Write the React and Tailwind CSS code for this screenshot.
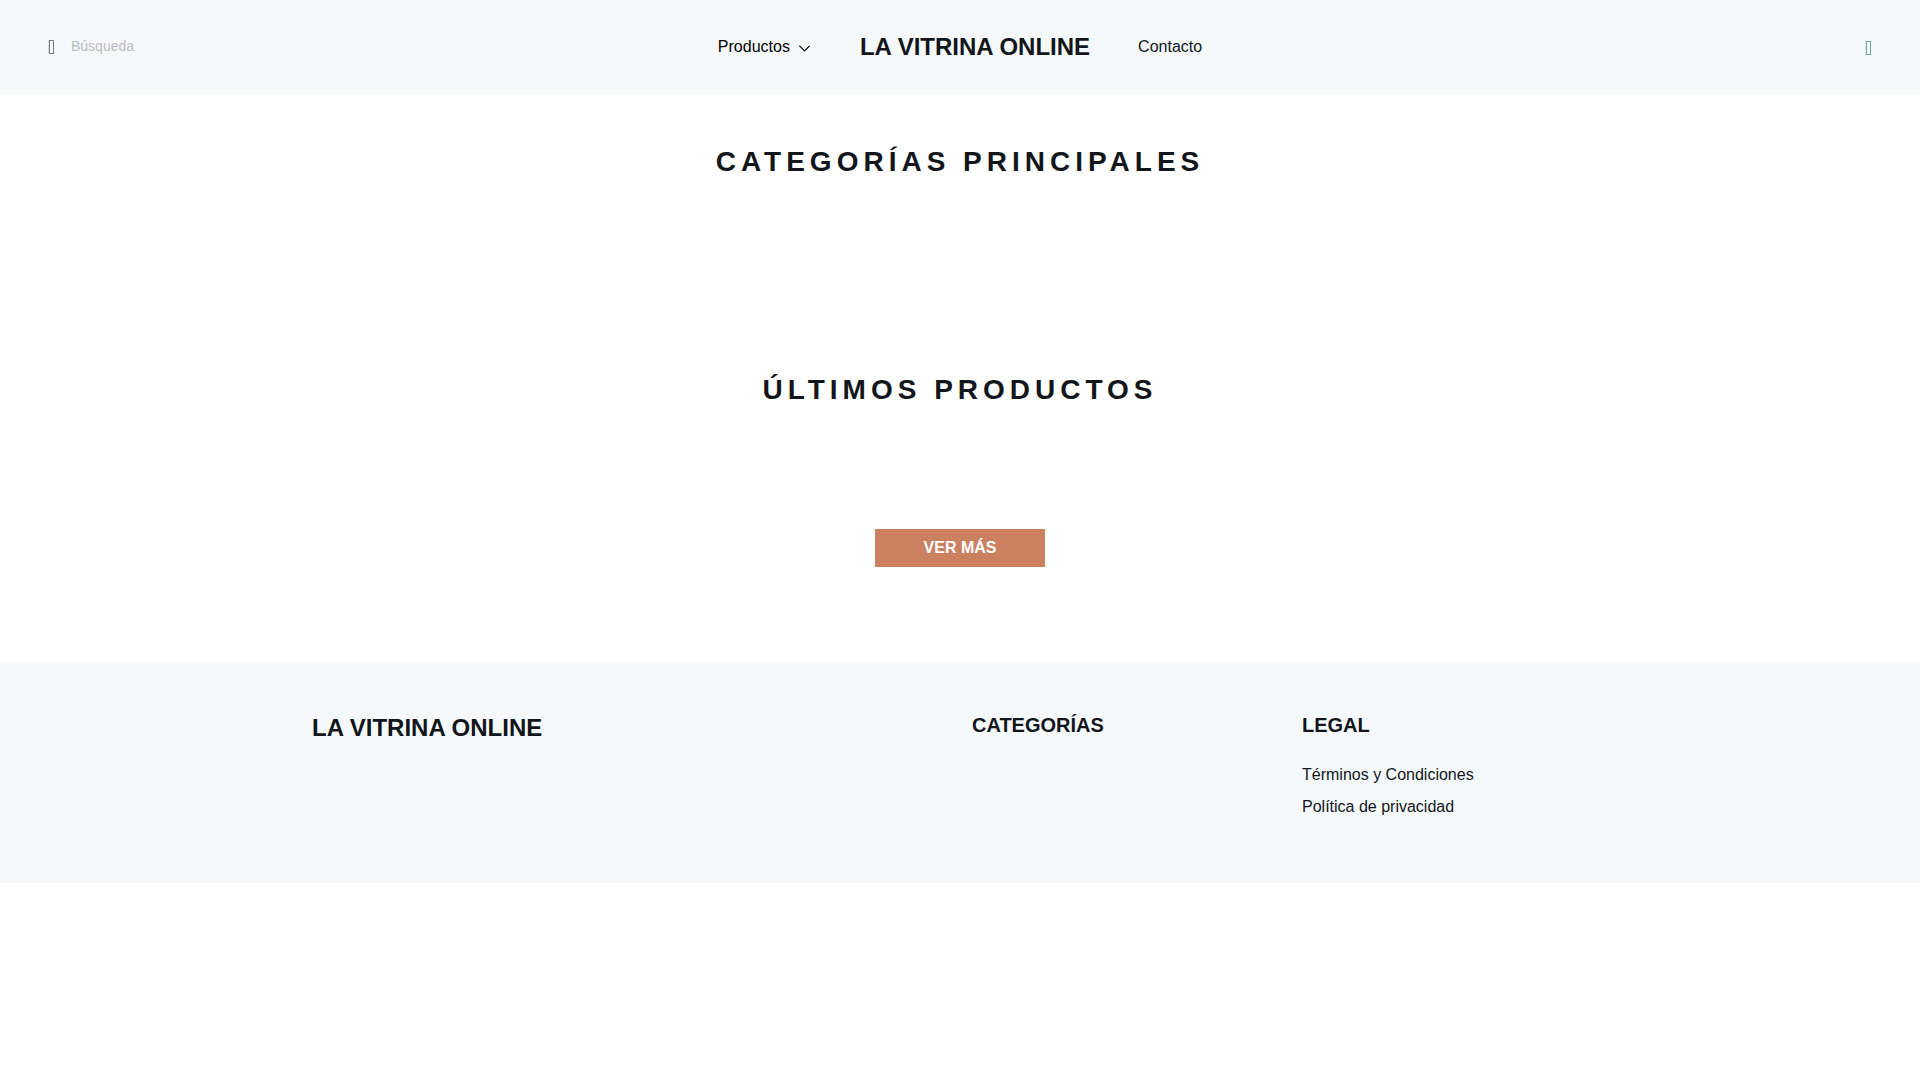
const legalLinks = [
  { id: 1, label: 'Términos y Condiciones' },
  { id: 2, label: 'Política de privacidad' },
];

function BoxIcon() {
  return (
    <svg width="6" height="14" viewBox="0 0 6 14" fill="none" stroke="currentColor" aria-hidden="true">
      <path d="M0.5 0V14" strokeOpacity="0.2" />
      <rect x="1.5" y="0.5" width="4" height="13" />
    </svg>
  );
}

function Chevron() {
  return (
    <svg className="mt-0.5 mr-px" width="13" height="13" viewBox="0 0 16 16" fill="none" stroke="currentColor" strokeWidth="1.5" strokeLinecap="round" strokeLinejoin="round" aria-hidden="true">
      <path d="M2 5l6 6 6-6" />
    </svg>
  );
}

function SectionTitle({ children }) {
  return <h2 className="text-center text-[28px] leading-10 font-bold tracking-[5px] uppercase">{children}</h2>;
}

export default function App() {
  return (
    <div className="bg-white text-[#12161a] text-base font-['Liberation_Sans',Arial,sans-serif]">
      {/* Header */}
      <header className="grid grid-cols-[1fr_auto_1fr] items-center min-h-[94px] px-12 bg-[#f5f9fc]">
        <form className="flex items-center gap-[17px]" onSubmit={(e) => e.preventDefault()}>
          <button type="submit" aria-label="Buscar" className="text-[#777788]">
            <BoxIcon />
          </button>
          <input
            type="search"
            placeholder="Búsqueda"
            aria-label="Búsqueda"
            className="w-48 pb-0.5 bg-transparent text-sm outline-none placeholder:text-[#b8bcc3]"
          />
        </form>

        <nav className="flex items-center gap-12">
          <button type="button" className="flex items-center gap-2 text-black">
            Productos
            <Chevron />
          </button>
          <a href="#" className="text-2xl font-bold">LA VITRINA ONLINE</a>
          <a href="#contacto">Contacto</a>
        </nav>

        <button type="button" aria-label="Carrito" className="justify-self-end mt-0.5 mr-px text-[#70a993]">
          <BoxIcon />
        </button>
      </header>

      {/* Sections */}
      <main>
        <section className="pt-12 pb-35">
          <SectionTitle>Categorías principales</SectionTitle>
        </section>
        <section className="flex flex-col items-center pt-12 pb-24">
          <SectionTitle>Últimos productos</SectionTitle>
          <a href="#productos" className="mt-[119px] px-[49px] py-[7px] bg-[#cb8060] text-white font-bold">VER MÁS</a>
        </section>
      </main>

      {/* Footer */}
      <footer className="pt-12 pb-16 bg-[#f5f9fc]">
        <div className="grid grid-cols-[2fr_1fr_1fr] max-w-[1320px] mx-auto">
          <div className="px-3">
            <a href="#" className="block text-2xl leading-[34px] font-bold">LA VITRINA ONLINE</a>
          </div>
          <div className="px-3">
            <h3 className="text-xl leading-7 font-bold">CATEGORÍAS</h3>
          </div>
          <div className="px-3">
            <h3 className="text-xl leading-7 font-bold">LEGAL</h3>
            <ul className="flex flex-col gap-2 mt-6">
              {legalLinks.map((link) => (
                <li key={link.id}>
                  <a href="#legal">{link.label}</a>
                </li>
              ))}
            </ul>
          </div>
        </div>
      </footer>
    </div>
  );
}
